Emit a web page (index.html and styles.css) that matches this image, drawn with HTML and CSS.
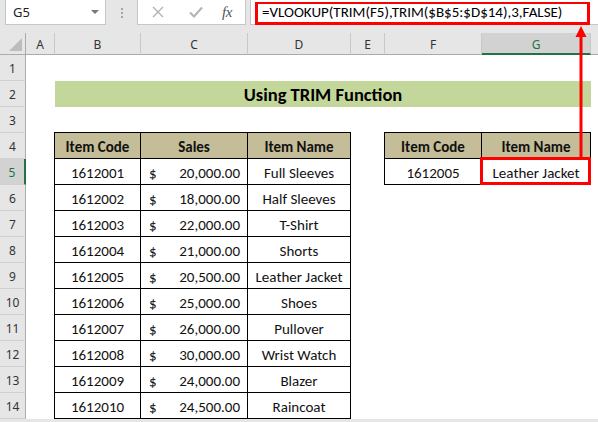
FILE: index.html
```html
<!DOCTYPE html>
<html>
<head>
<meta charset="utf-8">
<link rel="stylesheet" href="styles.css">
</head>
<body>
<div class="app">
  <div class="fbar">
    <div class="namebox"><span class="nb-text">G5</span><span class="dd"></span></div>
    <div class="sep"><i></i><i></i><i></i></div>
    <div class="fxbox">
      <svg class="ico" width="12" height="12" viewBox="0 0 12 12"><path d="M1 1 L11 11 M11 1 L1 11" stroke="#b3b3b3" stroke-width="1.4" fill="none"/></svg>
      <svg class="ico" width="14" height="12" viewBox="0 0 14 12"><path d="M1 6.5 L5 10.5 L13 1.5" stroke="#b3b3b3" stroke-width="2" fill="none"/></svg>
      <span class="fx">fx</span>
    </div>
    <div class="formula"><div class="ftext">=VLOOKUP(TRIM(F5),TRIM($B$5:$D$14),3,FALSE)</div></div>
  </div>

  <div class="sheet">
    <div class="corner"><span class="tri"></span></div>
    <div class="ch">A</div>
    <div class="ch">B</div>
    <div class="ch">C</div>
    <div class="ch">D</div>
    <div class="ch">E</div>
    <div class="ch">F</div>
    <div class="ch ch-sel">G</div>
    <div class="ch ch-end"></div>

    <div class="rh r1">1</div>
    <div class="rh r2">2</div>
    <div class="rh r3">3</div>
    <div class="rh r4">4</div>
    <div class="rh r5 rh-sel">5</div>
    <div class="rh r6">6</div>
    <div class="rh r7">7</div>
    <div class="rh r8">8</div>
    <div class="rh r9">9</div>
    <div class="rh r10">10</div>
    <div class="rh r11">11</div>
    <div class="rh r12">12</div>
    <div class="rh r13">13</div>
    <div class="rh r14">14</div>

    <div class="title">Using TRIM Function</div>

    <div class="tbl tbl1">
      <div class="c hd">Item Code</div><div class="c hd">Sales</div><div class="c hd">Item Name</div>
      <div class="c">1612001</div><div class="c acc"><span>$</span><span>20,000.00</span></div><div class="c">Full Sleeves</div>
      <div class="c">1612002</div><div class="c acc"><span>$</span><span>18,000.00</span></div><div class="c">Half Sleeves</div>
      <div class="c">1612003</div><div class="c acc"><span>$</span><span>22,000.00</span></div><div class="c">T-Shirt</div>
      <div class="c">1612004</div><div class="c acc"><span>$</span><span>21,000.00</span></div><div class="c">Shorts</div>
      <div class="c">1612005</div><div class="c acc"><span>$</span><span>20,500.00</span></div><div class="c">Leather Jacket</div>
      <div class="c">1612006</div><div class="c acc"><span>$</span><span>25,000.00</span></div><div class="c">Shoes</div>
      <div class="c">1612007</div><div class="c acc"><span>$</span><span>26,000.00</span></div><div class="c">Pullover</div>
      <div class="c">1612008</div><div class="c acc"><span>$</span><span>30,000.00</span></div><div class="c">Wrist Watch</div>
      <div class="c">1612009</div><div class="c acc"><span>$</span><span>24,000.00</span></div><div class="c">Blazer</div>
      <div class="c">1612010</div><div class="c acc"><span>$</span><span>24,500.00</span></div><div class="c">Raincoat</div>
    </div>

    <div class="tbl tbl2">
      <div class="c hd">Item Code</div><div class="c hd">Item Name</div>
      <div class="c">1612005</div><div class="c active">Leather Jacket<span class="hl"></span></div>
    </div>
  </div>

  <svg class="arrow" width="598" height="422" viewBox="0 0 598 422">
    <line x1="581" y1="34" x2="581" y2="158" stroke="#ff0000" stroke-width="3"/>
    <polygon points="581,26 575.5,37 586.5,37" fill="#ff0000"/>
  </svg>
</div>
</body>
</html>
```

FILE: styles.css
```css
html, body {
  margin: 0;
  padding: 0;
}
body {
  width: 598px;
  height: 422px;
  overflow: hidden;
  background: #ffffff;
  font-family: "Carlito", "Calibri", "Lato", sans-serif;
}
.app {
  position: relative;
  width: 598px;
  height: 422px;
  background: #e6e6e6;
}

/* ---------- formula bar ---------- */
.fbar {
  display: flex;
  height: 25px;
  padding-left: 5px;
  margin-bottom: 8px;
}
.namebox {
  width: 101px;
  box-sizing: border-box;
  background: #fff;
  border: 1px solid #c6c6c6;
  border-top: none;
  display: flex;
  align-items: center;
  justify-content: space-between;
  padding: 0 6px 0 7px;
}
.nb-text {
  font-family: "Noto Sans", "Open Sans", sans-serif;
  font-size: 13px;
  color: #222;
}
.dd {
  width: 0;
  height: 0;
  border-left: 4px solid transparent;
  border-right: 4px solid transparent;
  border-top: 4px solid #777;
}
.sep {
  width: 31px;
  display: flex;
  flex-direction: column;
  align-items: center;
  justify-content: center;
  gap: 2px;
}
.sep i {
  display: block;
  width: 2px;
  height: 2px;
  background: #a6a6a6;
}
.fxbox {
  width: 109px;
  box-sizing: border-box;
  background: #fff;
  border: 1px solid #c6c6c6;
  border-top: none;
  display: flex;
  align-items: center;
  padding-left: 14px;
  gap: 0;
}
.fxbox .ico:nth-child(1) { margin-right: 25px; }
.fxbox .ico:nth-child(2) { margin-right: 19px; }
.fx {
  font-family: "Liberation Serif", serif;
  font-style: italic;
  font-size: 15px;
  color: #555;
  letter-spacing: -0.5px;
}
.formula {
  flex: 1;
  margin-left: 4px;
  background: #fff;
  border-left: 1px solid #c6c6c6;
  border-bottom: 1px solid #c6c6c6;
  padding: 2px 8px 0 4px;
  box-sizing: border-box;
}
.ftext {
  height: 23px;
  box-sizing: border-box;
  border: 3px solid #ff0000;
  border-top-width: 2px;
  padding-left: 4px;
  font-size: 15px;
  line-height: 17px;
  color: #000;
  white-space: nowrap;
  overflow: hidden;
}

/* ---------- sheet ---------- */
.sheet {
  display: grid;
  grid-template-columns: 26px 29px 86px 107px 103px 34px 97px 109px 7px;
  grid-template-rows: 22px repeat(14, 26px);
  background: #fff;
}
.corner {
  background: #e6e6e6;
  border-right: 1px solid #ababab;
  border-bottom: 1px solid #ababab;
  position: relative;
}
.tri {
  position: absolute;
  right: 3px;
  bottom: 3px;
  width: 0;
  height: 0;
  border-left: 13px solid transparent;
  border-bottom: 13px solid #bdbdbd;
}
.ch {
  background: #e6e6e6;
  border-bottom: 1px solid #ababab;
  border-right: 1px solid #c8c8c8;
  display: flex;
  align-items: center;
  justify-content: center;
  font-family: "Noto Sans", "Open Sans", sans-serif;
  font-size: 12px;
  color: #333;
  padding-top: 2px;
}
.ch-sel {
  background: #d2d2d2;
  color: #217346;
  border-bottom: 2px solid #217346;
}
.ch-end { border-right: none; }

.rh {
  grid-column: 1;
  background: #e6e6e6;
  border-right: 1px solid #ababab;
  border-bottom: 1px solid #d0d0d0;
  display: flex;
  align-items: center;
  justify-content: center;
  font-family: "Noto Sans", "Open Sans", sans-serif;
  font-size: 12px;
  color: #333;
  padding-top: 2px;
}
.rh-sel {
  background: #d2d2d2;
  color: #217346;
  border-right: 2px solid #217346;
}
.r1 { grid-row: 2; }
.r2 { grid-row: 3; }
.r3 { grid-row: 4; }
.r4 { grid-row: 5; }
.r5 { grid-row: 6; }
.r6 { grid-row: 7; }
.r7 { grid-row: 8; }
.r8 { grid-row: 9; }
.r9 { grid-row: 10; }
.r10 { grid-row: 11; }
.r11 { grid-row: 12; }
.r12 { grid-row: 13; }
.r13 { grid-row: 14; }
.r14 { grid-row: 15; }

.title {
  grid-column: 3 / 9;
  grid-row: 3;
  background: #c4d79b;
  display: flex;
  align-items: center;
  justify-content: center;
  font-weight: bold;
  font-size: 18.5px;
  color: #000;
  padding-top: 1px;
}

.tbl {
  display: grid;
  grid-auto-rows: 26px;
  border-left: 1px solid #000;
  border-top: 1px solid #000;
  margin-left: -1px;
  margin-top: -1px;
  align-self: start;
  justify-self: start;
}
.tbl1 {
  grid-column: 3 / 6;
  grid-row: 5 / 16;
  grid-template-columns: 86px 107px 103px;
}
.tbl2 {
  grid-column: 7 / 9;
  grid-row: 5 / 7;
  grid-template-columns: 97px 109px;
}
.c {
  box-sizing: border-box;
  border-right: 1px solid #000;
  border-bottom: 1px solid #000;
  display: flex;
  align-items: center;
  justify-content: center;
  font-size: 15px;
  color: #111;
  white-space: nowrap;
  padding-top: 2px;
}
.hd {
  background: #c4bd97;
  font-weight: bold;
}
.acc {
  justify-content: space-between;
  padding-left: 8px;
  padding-right: 7px;
}
.active {
  position: relative;
}
.hl {
  position: absolute;
  left: -2px;
  top: -2px;
  right: -1px;
  bottom: -1px;
  border: 3px solid #ff0000;
}

.arrow {
  position: absolute;
  left: 0;
  top: 0;
  pointer-events: none;
}
```
